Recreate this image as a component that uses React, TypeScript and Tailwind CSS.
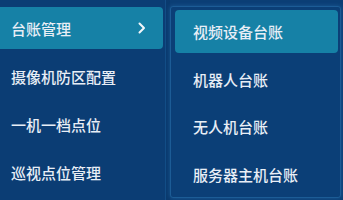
import React from "react";

const leftItems = ["台账管理", "摄像机防区配置", "一机一档点位", "巡视点位管理"];
const subItems = ["视频设备台账", "机器人台账", "无人机台账", "服务器主机台账"];

export default function App() {
  return (
    <div
      className="w-[343px] h-[200px] bg-[#0b3e75] flex overflow-hidden text-[#e8eef6]"
      style={{ fontFamily: '"Noto Sans CJK SC", "Noto Sans", sans-serif' }}
    >
      <div className="w-[166px] shrink-0 pt-[4px] border-r border-[#134d86] bg-[#0b3d74]">
        {leftItems.map((t, i) => (
          <div key={t} className="h-[48px] flex items-center">
            {i === 0 ? (
              <div className="w-[163px] h-[42px] bg-[#1681a6] rounded-r-[4px] flex items-center justify-between pl-[11px] pr-[16px]">
                <span className="text-[15px] font-medium leading-none">{t}</span>
                <svg width="10" height="12" viewBox="0 0 10 12" fill="none">
                  <path d="M2.5 1.5 L7 6 L2.5 10.5" stroke="#f2f6fa" strokeWidth="2" strokeLinecap="round" strokeLinejoin="round" />
                </svg>
              </div>
            ) : (
              <span className="pl-[11px] text-[15px] font-medium leading-none">{t}</span>
            )}
          </div>
        ))}
      </div>
      <div className="w-[4px] shrink-0 bg-[#0a3a6e]" />
      <div className="mt-[6px] h-[192px] w-[171px] shrink-0 border border-[#1c5c96] rounded-[3px] bg-[#0b3f77] pl-[4px] pr-[2px] pt-[1px] shadow-[0_0_4px_#1b5a94]">
        {subItems.map((t, i) => (
          <div key={t} className="h-[47.5px] flex items-center">
            {i === 0 ? (
              <div className="w-full h-[43px] bg-[#1681a6] rounded-[4px] flex items-center pl-[18px]">
                <span className="text-[15px] font-medium leading-none">{t}</span>
              </div>
            ) : (
              <span className="pl-[18px] text-[15px] font-medium leading-none">{t}</span>
            )}
          </div>
        ))}
      </div>
    </div>
  );
}
